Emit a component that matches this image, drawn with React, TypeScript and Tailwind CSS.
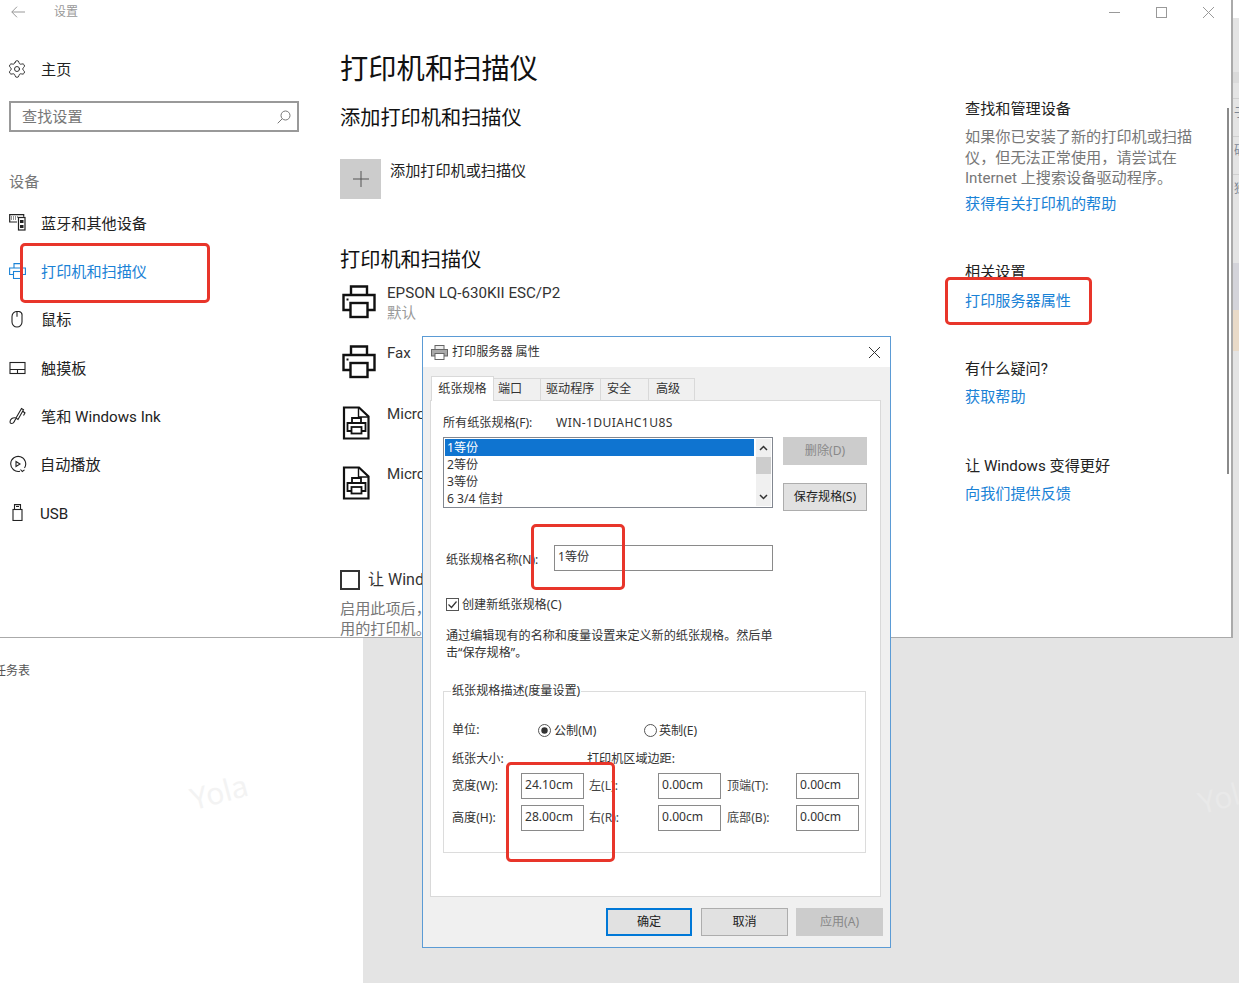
import React from "react";
import { Settings } from "lucide-react";

const BLUE = "text-[#1a82d6]";

function BigPrinter() {
  return (
    <svg width="34" height="34" viewBox="0 0 34 34" fill="none" stroke="#111" strokeWidth="2.4">
      <path d="M9 10V1.5h16V10M8 25H1.5V10h31v15H26" />
      <rect x="8.5" y="18" width="17" height="14" />
      <rect x="4.5" y="13.5" width="2" height="2" fill="#111" stroke="none" />
    </svg>
  );
}

function DocPrinter() {
  return (
    <svg width="30" height="34" viewBox="0 0 30 34" fill="none" stroke="#111" strokeWidth="2.2">
      <path d="M2 1.5h15l9.5 9v22H2z" />
      <path d="M16.5 1.5v9.5h10" strokeWidth="1.4" />
      <path d="M10 17v-5h9v5M9 25H5.500v-8h18v8H20" strokeWidth="1.8" />
      <rect x="9.500" y="21" width="10" height="6.500" strokeWidth="1.8" />
    </svg>
  );
}

const sideIcons: Record<string, React.ReactNode> = {
  keyboard: (
    <svg width="17" height="17" viewBox="0 0 17 17" fill="none" stroke="#222" strokeWidth="1.2">
      <path d="M8 8H.7V.7h14v2" />
      <path d="M2 3h7M2 5h5" strokeDasharray="1 1" />
      <rect x="9.500" y="3.500" width="6.500" height="12.500" />
      <rect x="11" y="6" width="3.500" height="3" fill="#222" stroke="none" />
      <rect x="11" y="11" width="3.500" height="3" fill="#222" stroke="none" />
    </svg>
  ),
  printer: (
    <svg width="17" height="16" viewBox="0 0 17 16" fill="none" stroke="#1a82d6" strokeWidth="1.1">
      <path d="M5 5V.6h7V5M4 11.500H.6V5h15.800v6.500H13" />
      <rect x="4.500" y="8.500" width="8" height="7" />
    </svg>
  ),
  mouse: (
    <svg width="17" height="17" viewBox="0 0 17 17" fill="none" stroke="#222" strokeWidth="1.1">
      <path d="M3 5.500a5 5 0 0 1 5-5h1a5 5 0 0 1 1 0 4 4 0 0 1 3 4.500v6a5 5 0 0 1-10 0z" />
      <path d="M8 .8v5" />
    </svg>
  ),
  touchpad: (
    <svg width="17" height="14" viewBox="0 0 17 14" fill="none" stroke="#222" strokeWidth="1.1">
      <rect x="1" y="1.500" width="15" height="11" />
      <path d="M1 8.500h15M8.500 8.500v4" />
    </svg>
  ),
  pen: (
    <svg width="17" height="18" viewBox="0 0 17 18" fill="none" stroke="#222" strokeWidth="1.1">
      <path d="M7 11l5.500-9.500 2 1.200L9 12.500zM13.500 4l2.500 2-1.500 2.500" />
      <path d="M7 11c-3-1-6 1-6 4 0 2 3 2 4 0 .7-1.200 1-2.500 2-3" />
    </svg>
  ),
  autoplay: (
    <svg width="18" height="18" viewBox="0 0 18 18" fill="none" stroke="#222" strokeWidth="1.1">
      <path d="M11 16.200A7.500 7.500 0 1 1 15.500 13" />
      <path d="M7 6.500l4 2.500-4 2.500z" />
      <path d="M11.500 14.500l1.800 2 2.200-1.600" />
    </svg>
  ),
  usb: (
    <svg width="17" height="17" viewBox="0 0 17 17" fill="none" stroke="#222" strokeWidth="1.1">
      <rect x="4" y="5.500" width="9" height="11" />
      <path d="M5.500 5.500V.6h6v4.900M7 2.500h3" />
    </svg>
  ),
};

const sideRows = [
  { icon: "keyboard", label: "蓝牙和其他设备" },
  { icon: "printer", label: "打印机和扫描仪", active: true },
  { icon: "mouse", label: "鼠标" },
  { icon: "touchpad", label: "触摸板" },
  { icon: "pen", label: "笔和 Windows Ink" },
  { icon: "autoplay", label: "自动播放", shift: true },
  { icon: "usb", label: "USB", shift: true },
];

function Sidebar() {
  return (
    <div className="w-[340px] shrink-0 pl-[9px]">
      <div className="mt-[25px] flex h-[40px] items-center">
        <div className="w-[32px]">
          <Settings size={20} strokeWidth={1.1} className="-ml-[2px] -mt-[1px] text-[#222]" />
        </div>
        <span className="pt-[2px] text-[15.150px] text-[#222]">主页</span>
      </div>
      <div className="mt-[12px] flex h-[31px] w-[290px] items-center justify-between border-2 border-[#999999] pl-[11px] pr-[6px]">
        <span className="text-[15.150px] leading-[20px] text-[#777777]">查找设置</span>
        <svg width="14" height="14" viewBox="0 0 14 14" fill="none" stroke="#777" strokeWidth="1">
          <circle cx="8.500" cy="5.500" r="4.500" />
          <path d="M5.200 8.800L.7 13.300" />
        </svg>
      </div>
      <div className="mt-[40px] h-[20px] text-[15.150px] leading-[20px] text-[#777777]">设备</div>
      <div className="mt-[6.500px]">
        {sideRows.map((r) => (
          <div key={r.label} className="flex h-[48.330px] items-center">
            <div className={r.shift ? "w-[31px]" : "w-[32px]"}>{sideIcons[r.icon]}</div>
            <span className={`pt-[2px] text-[15.150px] leading-[20px] ${r.active ? BLUE : "text-[#222222]"}`}>{r.label}</span>
          </div>
        ))}
      </div>
    </div>
  );
}

function PrinterRow({ name, sub, doc, h }: { name: string; sub?: string; doc?: boolean; h: string }) {
  return (
    <div className={`flex ${h}`}>
      <div className="w-[47px] pl-[2px] pt-[3px]">{doc ? <DocPrinter /> : <BigPrinter />}</div>
      <div className="pt-px">
        <div className="h-[20px] text-[15.150px] leading-[20px] text-[#333333]">{name}</div>
        {sub && <div className="h-[20px] pt-px text-[14.500px] leading-[20px] text-[#999999]">{sub}</div>}
      </div>
    </div>
  );
}

function MainCol() {
  return (
    <div className="w-[625px] shrink-0">
      <h1 className="mt-[26px] h-[40px] text-[28.300px] leading-[40px] text-[#111111]">打印机和扫描仪</h1>
      <h2 className="mt-[14px] h-[28px] text-[20.200px] leading-[28px] text-[#111111]">添加打印机和扫描仪</h2>
      <div className="mt-[27px] flex h-[40px] items-start">
        <div className="flex h-[40px] w-[41px] items-center justify-center bg-[#cccccc]">
          <svg width="16" height="16" viewBox="0 0 16 16" stroke="#555" strokeWidth="1">
            <path d="M8 0v16M0 8h16" />
          </svg>
        </div>
        <span className="ml-[9px] mt-[2px] text-[15.150px] leading-[20px] text-[#222222]">添加打印机或扫描仪</span>
      </div>
      <h2 className="mt-[47px] h-[28px] text-[20.200px] leading-[28px] text-[#111111]">打印机和扫描仪</h2>
      <div className="mt-[8px]">
        <PrinterRow name="EPSON LQ-630KII ESC/P2" sub="默认" h="h-[60px]" />
        <PrinterRow name="Fax" h="h-[61px]" />
        <PrinterRow name="Micro" doc h="h-[60px]" />
        <PrinterRow name="Micro" doc h="h-[60px]" />
      </div>
      <div className="mt-[47px] flex h-[20px] items-center">
        <div className="h-[20px] w-[20px] border-2 border-[#333333]" />
        <span className="ml-[8px] text-[16px] leading-[20px] text-[#333333]">让 Wind</span>
      </div>
      <div className="mt-[9px] text-[15.150px] leading-[20px] text-[#777777]">
        启用此项后，
        <br />
        用的打印机。
      </div>
    </div>
  );
}

function RightCol() {
  const head = "text-[15.150px] leading-[20px] text-[#222222]";
  const link = `text-[15.150px] leading-[20px] ${BLUE}`;
  return (
    <div className="flex-1">
      <div className={`mt-[75px] ${head}`}>查找和管理设备</div>
      <div className="mt-[8px] whitespace-nowrap text-[15.150px] leading-[20.500px] text-[#777777]">
        如果你已安装了新的打印机或扫描
        <br />
        仪，但无法正常使用，请尝试在
        <br />
        Internet 上搜索设备驱动程序。
      </div>
      <div className={`mt-[5.500px] ${link}`}>获得有关打印机的帮助</div>
      <div className={`mt-[48px] ${head}`}>相关设置</div>
      <div className={`mt-[9px] ${link}`}>打印服务器属性</div>
      <div className={`mt-[48px] ${head}`}>有什么疑问?</div>
      <div className={`mt-[8px] ${link}`}>获取帮助</div>
      <div className={`mt-[49px] ${head}`}>让 Windows 变得更好</div>
      <div className={`mt-[8px] ${link}`}>向我们提供反馈</div>
    </div>
  );
}

function TitleBar() {
  return (
    <div className="flex h-[24px] items-center pl-[11px]">
      <svg width="14" height="12" viewBox="0 0 14 12" fill="none" stroke="#999" strokeWidth="1">
        <path d="M6 .7L.8 6 6 11.300M.8 6H14" />
      </svg>
      <span className="ml-[29px] text-[12px] leading-[16px] text-[#999999]">设置</span>
      <div className="-mr-px ml-auto flex">
        <div className="flex h-[24px] w-[47px] items-center justify-center">
          <div className="h-px w-[11px] bg-[#999999]" />
        </div>
        <div className="flex h-[24px] w-[47px] items-center justify-center">
          <div className="h-[11px] w-[11px] border border-[#999999]" />
        </div>
        <div className="flex h-[24px] w-[47px] items-center justify-center">
          <svg width="11" height="11" viewBox="0 0 11 11" stroke="#999" strokeWidth="1">
            <path d="M0 0l11 11M11 0L0 11" />
          </svg>
        </div>
      </div>
    </div>
  );
}

function RightStrip() {
  const frag = "h-[38px] overflow-hidden border-b border-[#cfcfcf] pl-px pt-[6px] text-[12px] leading-[16px] text-[#7d8794]";
  return (
    <div className="flex-1 overflow-hidden bg-[#e4e4e4]">
      <div className="h-[18px] bg-white" />
      <div className="h-[54px]" />
      <div className="h-[11px] bg-[#dadada]" />
      <div className="h-[16px] border-b border-[#cfcfcf]" />
      <div className={frag}>子</div>
      <div className={frag}>矿</div>
      <div className="h-[88px] overflow-hidden pl-px pt-[6px] text-[12px] leading-[16px] text-[#7d8794]">独</div>
      <div className="h-[47px] bg-[#d4d4da]" />
      <div className="h-[41px] bg-[#e9dac8]" />
    </div>
  );
}

function Label({ children, className = "" }: { children: React.ReactNode; className?: string }) {
  return <span className={`whitespace-nowrap text-[12.100px] leading-[16px] text-[#333333] ${className}`}>{children}</span>;
}

function Field({ value }: { value: string }) {
  return (
    <div className="h-[26px] w-[63px] shrink-0 border border-[#8a8a8a] bg-white pl-[3px] text-[12.100px] leading-[21px] text-[#333333]">
      {value}
    </div>
  );
}

function MeasureRow({ cells }: { cells: [string, string][] }) {
  const gaps = ["mr-[5px]", "mr-[6px]", ""];
  return (
    <div className="flex">
      {cells.map(([l, v], i) => (
        <React.Fragment key={l}>
          <div className="flex h-[25px] w-[69px] shrink-0 items-center">
            <Label className={i === 0 ? "" : "text-[#444444]"}>{l}</Label>
          </div>
          <div className={gaps[i]}>
            <Field value={v} />
          </div>
        </React.Fragment>
      ))}
    </div>
  );
}

function DlgButton({ children, variant, w }: { children: React.ReactNode; variant?: "primary" | "disabled"; w: string }) {
  const c =
    variant === "primary"
      ? "border-2 border-[#0078d7] bg-[#e1e1e1] text-[#222222]"
      : variant === "disabled"
      ? "border border-[#cccccc] bg-[#cccccc] text-[#888888]"
      : "border border-[#adadad] bg-[#e1e1e1] text-[#222222]";
  return <div className={`flex h-[28px] items-center justify-center text-[12.100px] ${w} ${c}`}>{children}</div>;
}

function Dialog() {
  const tab = "flex h-[22px] items-center border border-b-0 border-l-0 border-[#d9d9d9] bg-[#f0f0f0] text-[12.100px] text-[#333333]";
  return (
    <div className="absolute left-[422px] top-[336px] z-10 flex h-[612px] w-[469px] flex-col border border-[#5b9bd5] bg-[#f0f0f0]">
      <div className="flex h-[30px] shrink-0 items-center bg-white pl-[8px] pr-[10px]">
        <svg width="17" height="15" viewBox="0 0 17 15" fill="none" stroke="#666" strokeWidth="1">
          <rect x="4" y=".5" width="9" height="4" fill="#eee" />
          <rect x=".5" y="4.500" width="16" height="6.500" fill="#aaa" />
          <rect x="4" y="8.500" width="9" height="6" fill="#fff" />
        </svg>
        <span className="ml-[4px] text-[12.100px] leading-[16px] text-[#333333]">打印服务器 属性</span>
        <svg className="ml-auto" width="11" height="11" viewBox="0 0 11 11" stroke="#333" strokeWidth="1">
          <path d="M0 0l11 11M11 0L0 11" />
        </svg>
      </div>
      <div className="flex-1 px-[7px] pt-[9px]">
        <div className="relative z-10 ml-px flex h-[24px] items-end">
          <div className="-mb-px flex h-[25px] w-[63px] items-center justify-center border border-b-0 border-[#d9d9d9] bg-white text-[12.100px] text-[#333333]">
            纸张规格
          </div>
          <div className={`${tab} w-[47px] pl-[4px]`}>端口</div>
          <div className={`${tab} w-[60px] pl-[5px]`}>驱动程序</div>
          <div className={`${tab} w-[48px] pl-[6px]`}>安全</div>
          <div className={`${tab} w-[46px] pl-[7px]`}>高级</div>
        </div>
        <div className="h-[497px] w-[451px] border border-[#d9d9d9] bg-white">
          <div className="ml-[12px] mt-[14px] flex h-[16px]">
            <Label className="w-[113px]">所有纸张规格(F):</Label>
            <Label className="tracking-[0.4px]">WIN-1DUIAHC1U8S</Label>
          </div>
          <div className="ml-[12px] mt-[6px] flex h-[74px]">
            <div className="flex h-[71px] w-[330px] border border-[#828790] p-px">
              <div className="flex-1 text-[12.100px] leading-[17px] text-[#333333]">
                <div className="bg-[#0f74d0] pl-[2px] text-white">1等份</div>
                <div className="pl-[2px]">2等份</div>
                <div className="pl-[2px]">3等份</div>
                <div className="pl-[2px]">6 3/4 信封</div>
              </div>
              <div className="ml-[2px] flex w-[15px] flex-col items-center bg-[#f0f0f0]">
                <svg className="mt-[6px]" width="9" height="6" viewBox="0 0 9 6" fill="none" stroke="#333" strokeWidth="1.500">
                  <path d="M1 5l3.500-3.500L8 5" />
                </svg>
                <div className="mt-[6px] h-[17px] w-full bg-[#cdcdcd]" />
                <svg className="mt-[20px]" width="9" height="6" viewBox="0 0 9 6" fill="none" stroke="#333" strokeWidth="1.500">
                  <path d="M1 1l3.500 3.500L8 1" />
                </svg>
              </div>
            </div>
            <div className="ml-[10px] flex w-[84px] flex-col gap-[18px]">
              <DlgButton variant="disabled" w="w-[84px]">删除(D)</DlgButton>
              <DlgButton w="w-[84px]">保存规格(S)</DlgButton>
            </div>
          </div>
          <div className="ml-[15px] mt-[34px] flex h-[26px] items-center">
            <Label className="w-[108px] pt-[4px]">纸张规格名称(N):</Label>
            <div className="h-[26px] w-[219px] border border-[#8a8a8a] pl-[3px] text-[12.100px] leading-[21px] text-[#333333]">1等份</div>
          </div>
          <div className="ml-[15px] mt-[25px] flex h-[16px] items-center">
            <svg width="13" height="13" viewBox="0 0 13 13" fill="none">
              <rect x=".5" y=".5" width="12" height="12" stroke="#555" />
              <path d="M2.500 6.500l3 3 5-6" stroke="#333" strokeWidth="1.200" />
            </svg>
            <Label className="ml-[3px] pt-[2px]">创建新纸张规格(C)</Label>
          </div>
          <div className="ml-[15px] mt-[15px] whitespace-nowrap text-[12.100px] leading-[17px] text-[#333333]">
            通过编辑现有的名称和度量设置来定义新的纸张规格。然后单
            <br />
            击“保存规格”。
          </div>
          <div className="relative ml-[12px] mt-[30px] h-[162px] w-[423px] border border-[#dcdcdc] pl-[8px]">
            <div className="absolute left-[7px] top-[-9px] flex bg-white px-px">
              <Label>纸张规格描述(度量设置)</Label>
            </div>
            <div className="mt-[30px] flex h-[16px] items-center">
              <Label className="w-[86px]">单位:</Label>
              <div className="flex w-[106px] items-center">
                <svg width="13" height="13" viewBox="0 0 13 13" fill="none">
                  <circle cx="6.500" cy="6.500" r="6" stroke="#555" />
                  <circle cx="6.500" cy="6.500" r="3.200" fill="#333" />
                </svg>
                <Label className="ml-[3px] pt-[2px]">公制(M)</Label>
              </div>
              <svg width="13" height="13" viewBox="0 0 13 13" fill="none">
                <circle cx="6.500" cy="6.500" r="6" stroke="#555" />
              </svg>
              <Label className="ml-[2px] pt-[2px]">英制(E)</Label>
            </div>
            <div className="mt-[13px] flex h-[16px]">
              <Label className="w-[135px]">纸张大小:</Label>
              <Label>打印机区域边距:</Label>
            </div>
            <div className="mt-[6px] flex flex-col gap-[6px]">
              <MeasureRow cells={[["宽度(W):", "24.10cm"], ["左(L):", "0.00cm"], ["顶端(T):", "0.00cm"]]} />
              <MeasureRow cells={[["高度(H):", "28.00cm"], ["右(R):", "0.00cm"], ["底部(B):", "0.00cm"]]} />
            </div>
          </div>
        </div>
        <div className="ml-[176px] mt-[11px] flex">
          <DlgButton variant="primary" w="w-[86px]">确定</DlgButton>
          <div className="ml-[9px]"><DlgButton w="w-[87px]">取消</DlgButton></div>
          <div className="ml-[8px]"><DlgButton variant="disabled" w="w-[87px]">应用(A)</DlgButton></div>
        </div>
      </div>
    </div>
  );
}

export default function App() {
  const red = "absolute z-20 rounded-[5px] border-[3px] border-[#e8352a]";
  const mark = "absolute rotate-[-15deg] text-[30px] leading-[40px]";
  return (
    <div className="relative h-[983px] w-[1239px] overflow-hidden bg-[#e4e4e4] font-['Noto_Sans','Noto_Sans_CJK_SC',sans-serif]">
      <div className="flex h-[638px]">
        <div className="h-[638px] w-[1233px] shrink-0 border-b border-r-2 border-[#aaaaaa] bg-white font-['Roboto','Noto_Sans_CJK_SC',sans-serif]">
          <TitleBar />
          <div className="flex">
            <Sidebar />
            <MainCol />
            <RightCol />
          </div>
        </div>
        <RightStrip />
      </div>
      <div className="flex h-[345px]">
        <div className="w-[363px] bg-white pt-[25px]">
          <div className="-ml-[6px] text-[12px] leading-[16px] text-[#555555]">任务表</div>
        </div>
      </div>

      {/* scrollbar of the settings window */}
      <div className="absolute left-[1227px] top-[108px] h-[366px] w-[2px] bg-[#8a8a8a]" />

      {/* watermarks */}
      <div className={`${mark} left-[190px] top-[772px] text-[#f3f3f3]`}>Yola</div>
      <div className={`${mark} left-[1198px] top-[776px] text-[#e9e9e9]`}>Yola</div>

      <Dialog />

      {/* red annotations */}
      <div className={`${red} left-[20px] top-[243px] h-[60px] w-[190px]`} />
      <div className={`${red} left-[945px] top-[277px] h-[48px] w-[147px]`} />
      <div className={`${red} left-[531px] top-[524px] h-[66px] w-[94px]`} />
      <div className={`${red} left-[506px] top-[762px] h-[100px] w-[109px]`} />
    </div>
  );
}
